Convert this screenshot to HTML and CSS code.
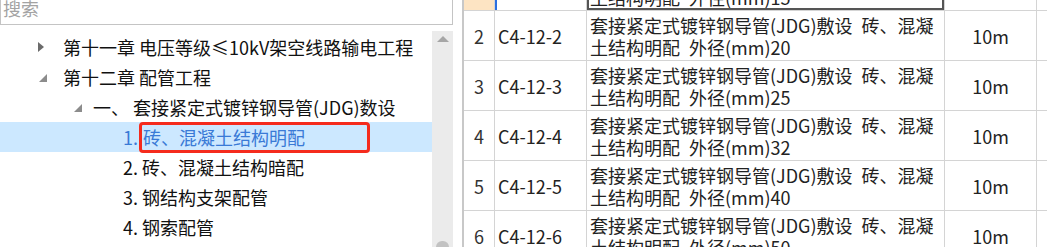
FILE: index.html
```html
<!DOCTYPE html>
<html lang="zh-CN">
<head>
    <meta charset="UTF-8">
    <title>定额库</title>
    <link rel="stylesheet" href="styles.css">
</head>
<body>
    <div class="page">
        <div class="left">
            <div class="search"><span>搜索</span></div>
            <div class="tree-wrap">
                <div class="tree">
                    <div class="node lv1"><i class="tog closed"></i>第十一章 电压等级≤10kV架空线路输电工程</div>
                    <div class="node lv1"><i class="tog open"></i>第十二章 配管工程</div>
                    <div class="node lv2"><i class="tog open"></i>一、 套接紧定式镀锌钢导管(JDG)数设</div>
                    <div class="node lv3 selected">1. <span class="mark">砖、混凝土结构明配</span></div>
                    <div class="node lv3">2. 砖、混凝土结构暗配</div>
                    <div class="node lv3">3. 钢结构支架配管</div>
                    <div class="node lv3">4. 钢索配管</div>
                </div>
                <div class="scrollbar">
                    <i class="arrow-up"></i>
                    <i class="thumb"></i>
                </div>
            </div>
        </div>

        <div class="grid">
            <div class="row first">
                <div class="cell num current"></div>
                <div class="cell code focus">C4-12-1</div>
                <div class="cell desc active"><span>套接紧定式镀锌钢导管(JDG)敷设&ensp;砖、混凝</span><span>土结构明配&ensp;外径(mm)15</span></div>
                <div class="cell unit">10m</div>
                <div class="cell rest"></div>
            </div>
            <div class="row">
                <div class="cell num">2</div>
                <div class="cell code">C4-12-2</div>
                <div class="cell desc"><span>套接紧定式镀锌钢导管(JDG)敷设&ensp;砖、混凝</span><span>土结构明配&ensp;外径(mm)20</span></div>
                <div class="cell unit">10m</div>
                <div class="cell rest"></div>
            </div>
            <div class="row">
                <div class="cell num">3</div>
                <div class="cell code">C4-12-3</div>
                <div class="cell desc"><span>套接紧定式镀锌钢导管(JDG)敷设&ensp;砖、混凝</span><span>土结构明配&ensp;外径(mm)25</span></div>
                <div class="cell unit">10m</div>
                <div class="cell rest"></div>
            </div>
            <div class="row">
                <div class="cell num">4</div>
                <div class="cell code">C4-12-4</div>
                <div class="cell desc"><span>套接紧定式镀锌钢导管(JDG)敷设&ensp;砖、混凝</span><span>土结构明配&ensp;外径(mm)32</span></div>
                <div class="cell unit">10m</div>
                <div class="cell rest"></div>
            </div>
            <div class="row">
                <div class="cell num">5</div>
                <div class="cell code">C4-12-5</div>
                <div class="cell desc"><span>套接紧定式镀锌钢导管(JDG)敷设&ensp;砖、混凝</span><span>土结构明配&ensp;外径(mm)40</span></div>
                <div class="cell unit">10m</div>
                <div class="cell rest"></div>
            </div>
            <div class="row">
                <div class="cell num">6</div>
                <div class="cell code">C4-12-6</div>
                <div class="cell desc"><span>套接紧定式镀锌钢导管(JDG)敷设&ensp;砖、混凝</span><span>土结构明配&ensp;外径(mm)50</span></div>
                <div class="cell unit">10m</div>
                <div class="cell rest"></div>
            </div>
        </div>
    </div>
</body>
</html>
```

FILE: styles.css
```css
html, body {
    margin: 0;
    padding: 0;
    background: #fff;
    overflow: hidden;
}
body {
    font-family: "Noto Sans CJK SC", "Noto Sans", sans-serif;
    font-size: 18px;
    color: #111;
}
.page {
    display: flex;
    height: 247px;
}

/* left tree panel */
.left {
    width: 453px;
    display: flex;
    flex-direction: column;
}
.search {
    height: 24px;
    border: 1px solid #c4c4c4;
    border-top: none;
    overflow: hidden;
}
.search span {
    display: block;
    line-height: 16px;
    padding-left: 2px;
    color: #a3a3a3;
}
.tree-wrap {
    flex: 1;
    display: flex;
    margin-top: 6px;
}
.tree {
    width: 432px;
    padding-top: 1px;
}
.node {
    height: 30px;
    line-height: 30px;
    display: flex;
    align-items: center;
    white-space: nowrap;
}
.node.lv1 { padding-left: 38px; }
.node.lv2 { padding-left: 73px; }
.node.lv3 { padding-left: 123px; white-space: pre; }
.node.selected {
    background: #cce8ff;
    color: #3a7ad6;
}
.tog {
    display: inline-block;
    flex: none;
}
.lv1 .tog { width: 25px; }
.lv2 .tog { width: 20px; }
.tog.closed::before {
    content: "";
    display: block;
    width: 0;
    height: 0;
    border-left: 6px solid #6b6b6b;
    border-top: 5px solid transparent;
    border-bottom: 5px solid transparent;
}
.tog.open::before {
    content: "";
    display: block;
    width: 0;
    height: 0;
    margin-left: 1px;
    margin-top: 2px;
    border-bottom: 8px solid #8c8c8c;
    border-left: 8px solid transparent;
}
.mark {
    display: inline-block;
    box-sizing: border-box;
    width: 231px;
    height: 31px;
    line-height: 25px;
    margin-top: 1px;
    margin-left: -3px;
    padding-left: 1px;
    border: 3px solid #f52b1d;
    border-radius: 4px;
}
.scrollbar {
    width: 21px;
    background: #ebebeb;
    display: flex;
    flex-direction: column;
    justify-content: space-between;
    align-items: center;
}
.arrow-up {
    display: block;
    margin-top: 5px;
    width: 0;
    height: 0;
    border-bottom: 6px solid #a6a6a6;
    border-left: 6px solid transparent;
    border-right: 6px solid transparent;
}
.thumb {
    display: block;
    width: 13px;
    height: 6px;
    background: #c2c2c2;
    border-radius: 7px 7px 0 0;
}

/* right quota grid */
.grid {
    flex: 1;
    margin-left: 9px;
    border-left: 2px solid #c8c8c8;
    overflow: hidden;
}
.row {
    display: grid;
    grid-template-columns: 31px 92px 358px 92px 1fr;
    height: 49px;
    border-bottom: 1px solid #d4d4d4;
}
.row.first {
    margin-top: -39px;
}
.cell {
    border-right: 1px solid #d4d4d4;
    display: flex;
    align-items: center;
    overflow: hidden;
    color: #222;
}
.cell.num {
    justify-content: center;
    color: #333;
}
.cell.code {
    padding-left: 3px;
}
.cell.desc {
    flex-direction: column;
    align-items: flex-start;
    justify-content: center;
    padding-left: 3px;
    white-space: nowrap;
}
.cell.desc span {
    display: block;
    height: 22px;
    line-height: 22px;
}
.cell.unit {
    justify-content: center;
}
.cell.rest {
    border-right: none;
}
.cell.current {
    background: #fde4c3;
}
.cell.focus {
    box-shadow: inset 2px 0 0 #2c6fe0;
}
.cell.active {
    box-shadow: inset 0 0 0 2px #555;
}
```
